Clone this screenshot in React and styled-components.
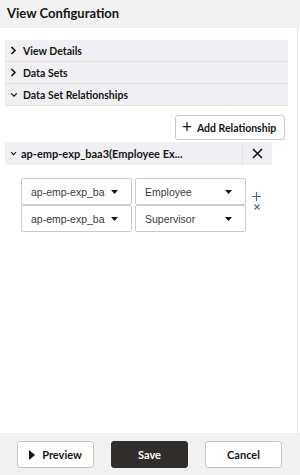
import React from 'react';
import styled, { createGlobalStyle } from 'styled-components';

const GlobalStyle = createGlobalStyle`
  html, body {
    margin: 0;
    padding: 0;
    background: #ffffff;
  }
  body {
    font-family: Lato, "Open Sans", "Liberation Sans", sans-serif;
    color: #161513;
  }
`;

const ChevronRight = () => (
  <svg width="7" height="9" viewBox="0 0 7 9">
    <path d="M1.5 1 L5 4.5 L1.5 8" fill="none" stroke="#161513" strokeWidth="1.6" />
  </svg>
);

const ChevronDown = ({ size = 8 }) => (
  <svg width={size} height={size * 0.7} viewBox="0 0 8 6">
    <path d="M1 1.5 L4 4.5 L7 1.5" fill="none" stroke="#161513" strokeWidth="1.3" />
  </svg>
);

const Caret = () => (
  <svg width="7" height="4" viewBox="0 0 7 4">
    <path d="M0 0 H7 L3.5 4 Z" fill="#161513" />
  </svg>
);

const sections = [
  { label: 'View Details', open: false },
  { label: 'Data Sets', open: false },
  { label: 'Data Set Relationships', open: true },
];

const rows = [
  { source: 'ap-emp-exp_ba', field: 'Employee' },
  { source: 'ap-emp-exp_ba', field: 'Supervisor' },
];

export default function App() {
  return (
    <Page>
      <GlobalStyle />
      <Header>View Configuration</Header>
      <Body>
        {sections.map((s) => (
          <SectionRow key={s.label}>
            <ChevIcon>{s.open ? <ChevronDown /> : <ChevronRight />}</ChevIcon>
            {s.label}
          </SectionRow>
        ))}

        <ActionBar>
          <OutlineButton>
            <PlusIcon>+</PlusIcon>
            Add Relationship
          </OutlineButton>
        </ActionBar>

        <RelationHeader>
          <RelationTitle>
            <ChevronDown size={7} />
            <span>ap-emp-exp_baa3(Employee Ex...</span>
          </RelationTitle>
          <CloseCell>
            <svg width="11" height="11" viewBox="0 0 11 11">
              <path d="M1 1 L10 10 M10 1 L1 10" stroke="#161513" strokeWidth="1.6" />
            </svg>
          </CloseCell>
        </RelationHeader>

        <MappingArea>
          <MappingGrid>
            {rows.map((r) => (
              <React.Fragment key={r.field}>
                <Select>
                  <SelectText>{r.source}</SelectText>
                  <Caret />
                </Select>
                <Select>
                  <SelectText>{r.field}</SelectText>
                  <Caret />
                </Select>
              </React.Fragment>
            ))}
          </MappingGrid>
          <RowTools>
            <svg width="9" height="9" viewBox="0 0 9 9">
              <path d="M4.5 0 V9 M0 4.5 H9" stroke="#3b6ea8" strokeWidth="1.2" />
            </svg>
            <svg width="6" height="6" viewBox="0 0 6 6">
              <path d="M0.5 0.5 L5.5 5.5 M5.5 0.5 L0.5 5.5" stroke="#3b6ea8" strokeWidth="1.2" />
            </svg>
          </RowTools>
        </MappingArea>
      </Body>
      <Footer>
        <FooterButton>
          <svg width="6" height="10" viewBox="0 0 6 10">
            <path d="M0 0 L6 5 L0 10 Z" fill="#161513" />
          </svg>
          Preview
        </FooterButton>
        <FooterButton primary>Save</FooterButton>
        <FooterButton>Cancel</FooterButton>
      </Footer>
    </Page>
  );
}

const Page = styled.div`
  width: 300px;
  height: 475px;
  display: flex;
  flex-direction: column;
  overflow: hidden;
`;

const Header = styled.div`
  height: 28px;
  display: flex;
  align-items: center;
  padding: 0 7px 2px;
  box-sizing: border-box;
  background: #f1f1f1;
  font-size: 13px;
  font-weight: 700;
`;

const Body = styled.div`
  flex: 1;
  width: 298px;
  box-sizing: border-box;
  border-right: 1px solid #dfe3ea;
  padding: 12px 9px 0 5px;
  display: flex;
  flex-direction: column;
`;

const SectionRow = styled.div`
  height: 21px;
  display: flex;
  align-items: center;
  background: #efeff4;
  border-bottom: 1px solid #e4e2d4;
  padding-left: 5px;
  font-size: 10.5px;
  font-weight: 700;
`;

const ChevIcon = styled.span`
  width: 13px;
  display: inline-flex;
  align-items: center;
`;

const ActionBar = styled.div`
  display: flex;
  justify-content: flex-end;
  padding: 9px 3px 0 0;
`;

const OutlineButton = styled.div`
  width: 110px;
  height: 25px;
  box-sizing: border-box;
  border: 1px solid #c9c9c9;
  border-radius: 3px;
  background: #ffffff;
  display: flex;
  align-items: center;
  gap: 5px;
  padding-left: 6px;
  font-size: 10.5px;
  font-weight: 700;
`;

const PlusIcon = styled.span`
  font-size: 17px;
  font-weight: 400;
  line-height: 1;
  margin-top: -2px;
`;

const RelationHeader = styled.div`
  margin-top: 2px;
  width: 267px;
  height: 23px;
  display: flex;
  align-items: center;
  background: #f0f0f4;
`;

const RelationTitle = styled.div`
  flex: 1;
  display: flex;
  align-items: center;
  gap: 4px;
  padding-left: 5px;
  font-size: 11px;
  font-weight: 700;
  white-space: nowrap;
  overflow: hidden;
`;

const CloseCell = styled.div`
  width: 29px;
  height: 100%;
  display: flex;
  align-items: center;
  justify-content: center;
  border-left: 1px solid #e6e4da;
`;

const MappingArea = styled.div`
  margin-top: 13px;
  padding-left: 16px;
  display: flex;
  align-items: center;
  gap: 6px;
`;

const MappingGrid = styled.div`
  display: grid;
  grid-template-columns: 111px 111px;
  column-gap: 3px;
`;

const Select = styled.div`
  height: 27px;
  box-sizing: border-box;
  border: 1px solid #cbcbcb;
  border-radius: 2px;
  display: flex;
  align-items: center;
  padding: 0 13px 0 9px;
  gap: 6px;
  background: #ffffff;
`;

const SelectText = styled.span`
  flex: 1;
  font-family: "Liberation Sans", Arial, sans-serif;
  font-size: 10.5px;
  color: #3a3a3a;
  white-space: nowrap;
  overflow: hidden;
`;

const RowTools = styled.div`
  display: flex;
  flex-direction: column;
  align-items: center;
  gap: 3px;
  margin-bottom: 8px;
`;

const Footer = styled.div`
  height: 42px;
  background: #f1f1f1;
  display: flex;
  align-items: flex-start;
  padding: 8px 0 0 17px;
  gap: 17px;
  box-sizing: border-box;
`;

const FooterButton = styled.div`
  width: 77px;
  height: 27px;
  box-sizing: border-box;
  border-radius: 3px;
  border: 1px solid ${(p) => (p.primary ? '#312d2a' : '#c6c6c6')};
  background: ${(p) => (p.primary ? '#312d2a' : '#ffffff')};
  color: ${(p) => (p.primary ? '#ffffff' : '#161513')};
  display: flex;
  align-items: center;
  justify-content: center;
  gap: 7px;
  font-size: 11px;
  font-weight: 700;
`;
